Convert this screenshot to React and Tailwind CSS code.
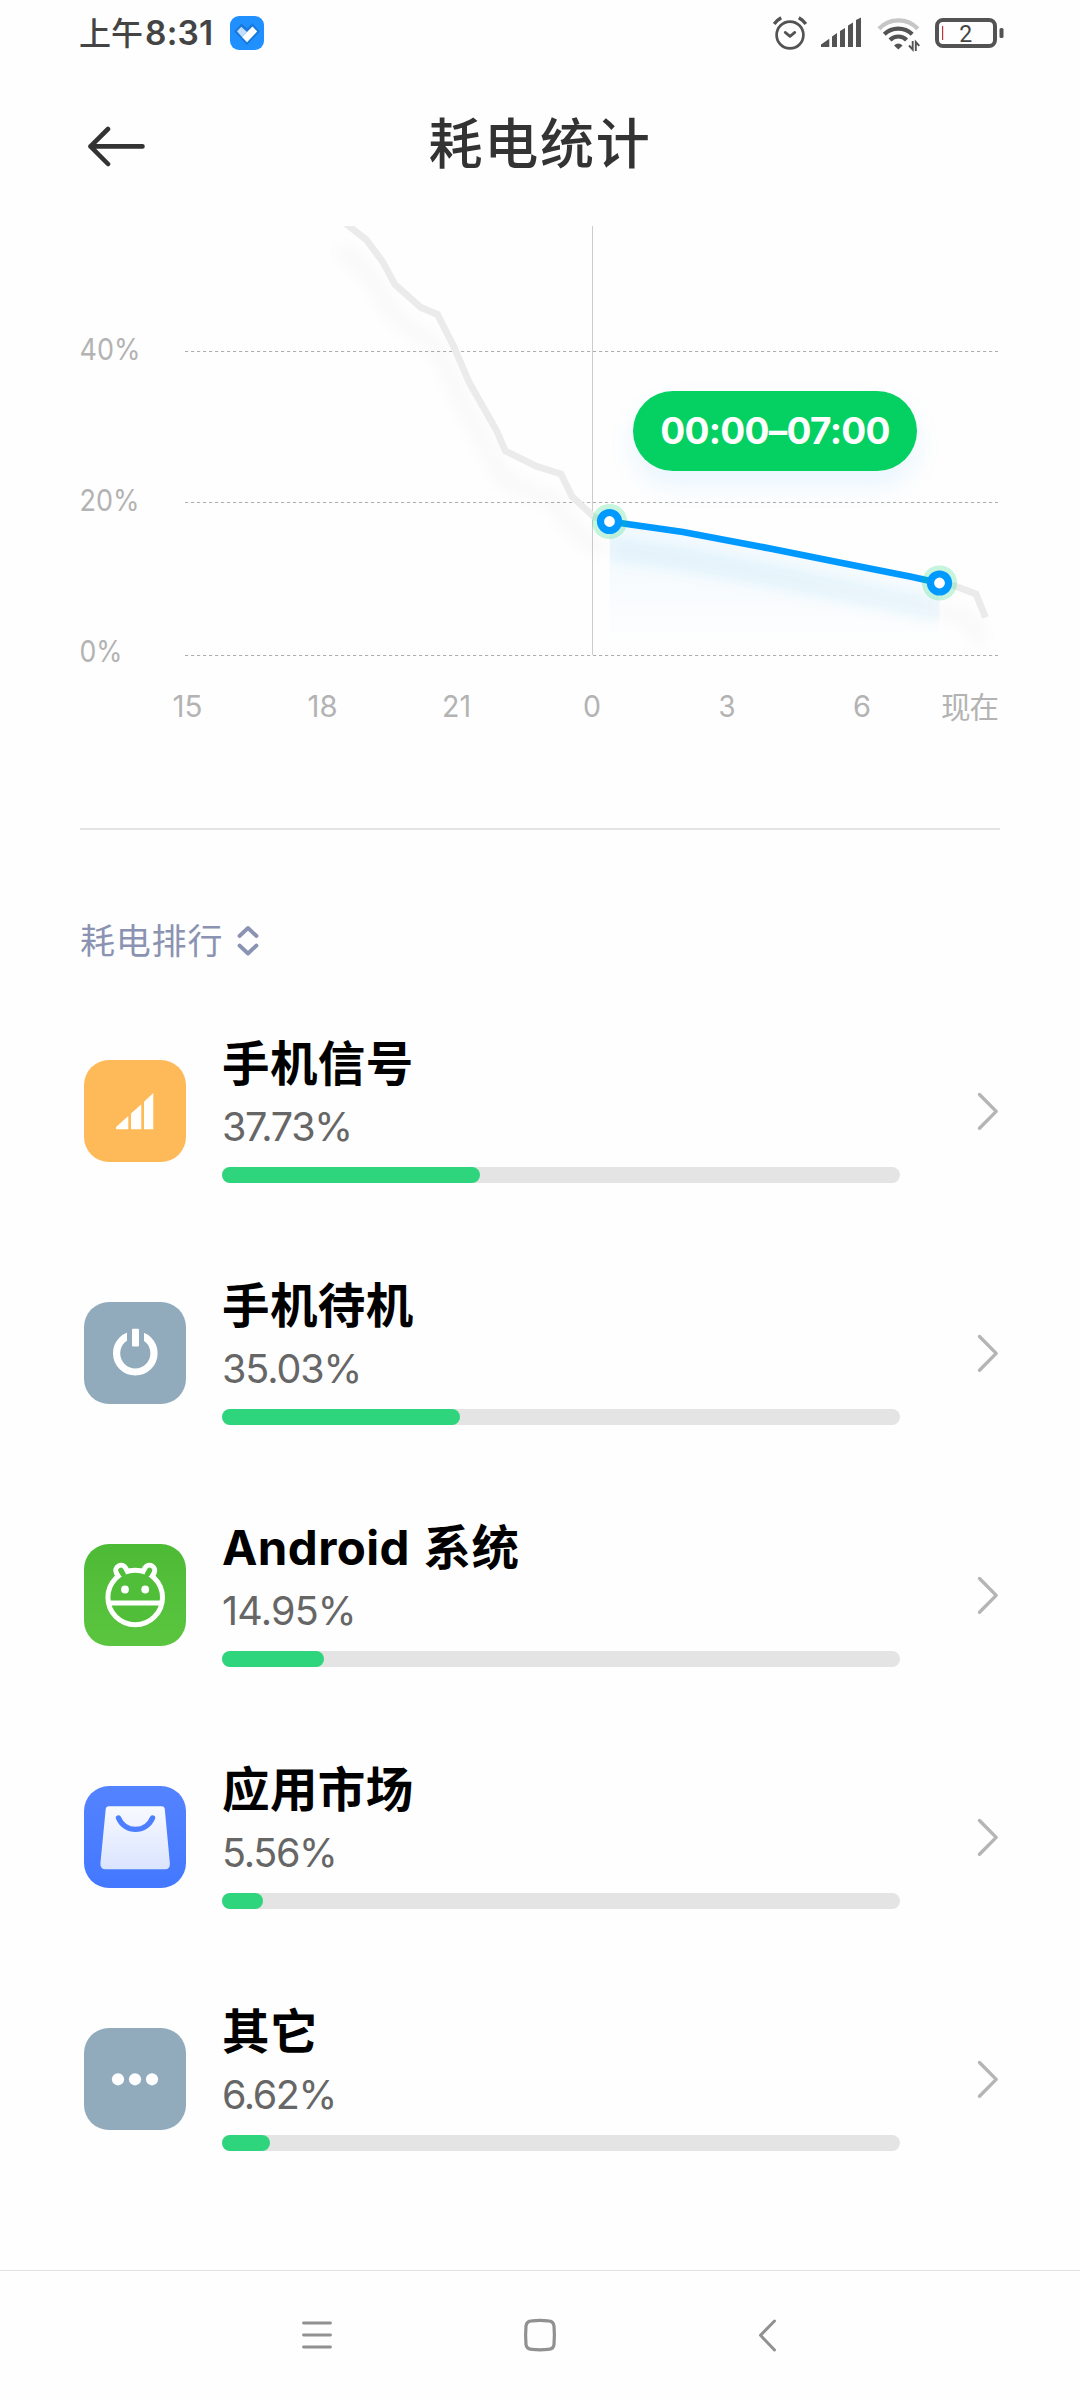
import React from "react";

const APPS = [
  { name: "手机信号", percent: "37.73%", bar: 258, icon: SignalAppIcon, spacing: "tracking-[-1.3px]" },
  { name: "手机待机", percent: "35.03%", bar: 238, icon: PowerAppIcon, spacing: "tracking-[-1.1px]" },
  { name: "Android 系统", percent: "14.95%", bar: 102, icon: AndroidAppIcon, spacing: "tracking-[-0.8px]" },
  { name: "应用市场", percent: "5.56%", bar: 41, icon: MarketAppIcon, spacing: "tracking-[-1.3px]" },
  { name: "其它", percent: "6.62%", bar: 48, icon: MoreAppIcon, spacing: "tracking-[-1.4px]" },
];

const HOURS = [
  { label: "15", x: 187.5, width: 30 },
  { label: "18", x: 322.5, width: 30 },
  { label: "21", x: 456.5, width: 29 },
  { label: "0", x: 592, width: 18 },
  { label: "3", x: 727, width: 17 },
  { label: "6", x: 862, width: 18 },
];

const LEVELS = [
  { label: "40%", y: 351.5, base: 360, width: 61 },
  { label: "20%", y: 502.5, base: 511, width: 60 },
  { label: "0%", y: 655.5, base: 662, width: 43 },
];

const PAST =
  "344,222 348,225.5 366,239.5 382.5,261.5 395,284.5 421,307.5 437.5,314.5 453.5,346 469.5,383 496.5,430.5 505.5,451 536,466 561,474 572,496.5 594,517 609.5,521.5";
const SELECTED = "609.5,521.5 683,532 770,548.5 837,562 910,576.5 939.5,583";
const REST = "939.5,583 955,586 976,594 985.5,617.5";

function StatusBar() {
  return (
    <div className="h-[72px] pl-[79px] pr-[76px] pb-[6px] flex items-center text-[#444444]">
      <span className="w-[151px] shrink-0 text-[32px] leading-[48px] font-medium whitespace-nowrap">
        上午<span className="ml-[2px] text-[33.5px] font-semibold tracking-[0.2px]">8:31</span>
      </span>
      <svg width="34" height="34" viewBox="0 0 34 34" className="shrink-0">
        <rect width="34" height="34" rx="9" fill="#2190ff" />
        <path d="M4 15.5 11.5 7.5 17 12.5 22.5 7.5 30 15.5 17 29Z" fill="#1878dc" />
        <path d="M7 15.3 11.3 10.7 17 16 12 21Z" fill="#c3defc" />
        <path d="M12 21 22.5 10.5 27.2 15.5 17 26.2Z" fill="#fff" />
      </svg>
      <svg width="36" height="40" viewBox="0 0 36 40" fill="none" stroke="#535353" className="ml-auto shrink-0" strokeLinecap="round" strokeLinejoin="round">
        <circle cx="18" cy="22" r="13.4" strokeWidth="2.7" />
        <path d="M13.2 19.4 18 23.4 22.8 19.4" strokeWidth="2.7" />
        <path d="M2.2 11Q5.2 7 9.2 4.8M26.8 4.8Q30.8 7 33.8 11" strokeLinecap="butt" strokeWidth="3.4" />
      </svg>
      <svg width="40" height="40" viewBox="0 0 40 40" className="ml-[13px] shrink-0" fill="#535353">
        <path d="M0 34V31.5L8.3 25.7V34ZM11 34V23.5L16 20V34ZM19 34V18L24 15V34ZM27 34V12.5L32 9.5V34ZM35 34V7L40 4.5V34Z" />
      </svg>
      <svg width="44" height="40" viewBox="0 0 44 40" className="ml-[16px] shrink-0" fill="none" strokeWidth="4.2">
        <path d="M2 15.8A26.5 26.5 0 0 1 40.8 15.8" stroke="#c6c6c6" />
        <path d="M7.3 21.2A20 20 0 0 1 35.2 21.2" stroke="#535353" />
        <path d="M13 27A11.6 11.6 0 0 1 29.6 27" stroke="#535353" />
        <path d="M17 32.5Q21.3 28.5 25.6 32.5L21.3 36.5Z" fill="#535353" />
        <path d="M32 32.5 35.7 36.5V28M38.8 38V29L42.3 32.8" stroke="#535353" strokeWidth="1.9" />
      </svg>
      <svg width="70" height="40" viewBox="0 0 70 40" className="ml-[13px] shrink-0">
        <rect x="3" y="7" width="58" height="26" rx="6" fill="none" stroke="#535353" strokeWidth="4" />
        <rect x="65.5" y="15" width="4" height="10" rx="1.6" fill="#535353" />
        <rect x="8" y="13" width="1.2" height="14" fill="#b8373d" />
        <text x="31.8" y="28.7" textAnchor="middle" fontSize="23" fontFamily="Roboto, sans-serif" fill="#444">
          2
        </text>
      </svg>
    </div>
  );
}

function Header() {
  return (
    <header className="h-[154px] px-[86px] pb-[8px] grid grid-cols-[62px_1fr_62px] items-center">
      <svg width="62" height="44" viewBox="0 0 62 44" fill="none" stroke="#333" strokeWidth="4.6" strokeLinecap="round" strokeLinejoin="round">
        <path d="M4.5 23.4H56.5M22 6 4.5 23.4 22 41" />
      </svg>
      <h1 className="text-center text-[54px] leading-[72px] font-medium tracking-[1.7px] text-[#333333]">
        耗电统计
      </h1>
    </header>
  );
}

function Handle({ x, y }) {
  return (
    <g>
      <circle cx={x} cy={y} r="17.6" fill="#04d162" fillOpacity="0.22" />
      <circle cx={x} cy={y} r="9" fill="#fff" stroke="#0099ff" strokeWidth="7.2" />
    </g>
  );
}

function BatteryChart() {
  return (
    <div className="relative h-[602px]">
      <svg width="1080" height="602" viewBox="0 226 1080 602" className="block">
        <defs>
          <linearGradient id="area" gradientUnits="userSpaceOnUse" x1="0" y1="521" x2="0" y2="648">
            <stop offset="0" stopColor="#0099ff" stopOpacity="0.055" />
            <stop offset="1" stopColor="#0099ff" stopOpacity="0" />
          </linearGradient>
          <filter id="soft" filterUnits="userSpaceOnUse" x="200" y="180" width="880" height="520">
            <feGaussianBlur stdDeviation="8" />
          </filter>
          <clipPath id="range">
            <rect x="610" y="490" width="329.5" height="164" />
          </clipPath>
        </defs>

        {LEVELS.map((l) => (
          <g key={l.label}>
            <text x="79.5" y={l.base} fontSize="29.5" fill="#b3b3b3" textLength={l.width} lengthAdjust="spacingAndGlyphs">
              {l.label}
            </text>
            <line x1="185" x2="998" y1={l.y} y2={l.y} stroke="#adadad" strokeDasharray="3.2 2.8" />
          </g>
        ))}
        <line x1="592.5" x2="592.5" y1="226" y2="655" stroke="#cccccc" />

        <g fill="none" strokeWidth="11" filter="url(#soft)" transform="translate(-4 27)">
          <polyline points={PAST} stroke="#000" strokeOpacity="0.03" />
          <polyline points={REST} stroke="#000" strokeOpacity="0.03" />
        </g>
        <polygon points={`${SELECTED} 939.5,650 609.5,650`} fill="url(#area)" />
        <g clipPath="url(#range)">
          <polyline points={SELECTED} fill="none" stroke="#2f9fd8" strokeOpacity="0.13" strokeWidth="14" filter="url(#soft)" transform="translate(0 27)" />
        </g>

        <g fill="none" strokeWidth="6.8">
          <polyline points={PAST} stroke="#ebebeb" />
          <polyline points={REST} stroke="#ebebeb" />
          <polyline points={SELECTED} stroke="#0099ff" />
        </g>
        <Handle x={609.5} y={521.5} />
        <Handle x={939.5} y={583} />

        {HOURS.map((h) => (
          <text key={h.label} x={h.x - h.width / 2} y="717" fontSize="29.5" fill="#b3b3b3" textLength={h.width} lengthAdjust="spacingAndGlyphs">
            {h.label}
          </text>
        ))}
        <text x="941" y="717.5" fontSize="29.5" fill="#b3b3b3" textLength="58">
          现在
        </text>
      </svg>
      <div className="absolute left-[633px] top-[165px] w-[284px] h-[80px] rounded-full bg-[#04d162] shadow-[0_14px_28px_rgba(0,153,255,0.09)] flex items-center justify-center text-white text-[37px] font-bold tracking-[-0.7px] whitespace-nowrap">
        00:00–07:00
      </div>
    </div>
  );
}

function SignalAppIcon() {
  return (
    <svg width="102" height="102" viewBox="0 0 102 102" fill="#fffefa">
      <rect width="102" height="102" rx="25" fill="#feba59" />
      <path d="M32 69.3V67L44.3 56V69.3ZM47 69.3V53.5L57.3 44.2V69.3ZM60 69.3V41.8L69.3 33V69.3Z" />
    </svg>
  );
}

function PowerAppIcon() {
  return (
    <svg width="102" height="102" viewBox="0 0 102 102">
      <rect width="102" height="102" rx="25" fill="#91abbd" />
      <circle cx="51.3" cy="51.3" r="18.7" fill="none" stroke="#fff" strokeWidth="7.2" />
      <rect x="43" y="24" width="17" height="22" fill="#91abbd" />
      <rect x="48" y="26.7" width="7" height="17.8" rx="1" fill="#fff" />
    </svg>
  );
}

function AndroidAppIcon() {
  return (
    <svg width="102" height="102" viewBox="0 0 102 102" fill="none" strokeLinecap="round">
      <defs>
        <linearGradient id="droid" x1="0" y1="0" x2="0" y2="1">
          <stop offset="0" stopColor="#4dba36" />
          <stop offset="1" stopColor="#5bc53f" />
        </linearGradient>
      </defs>
      <rect width="102" height="102" rx="25" fill="url(#droid)" />
      <path d="M37 26.5 41 34M65.5 26.5 61.5 34" stroke="#fff" strokeWidth="15.5" />
      <circle cx="51.2" cy="53.5" r="27.3" fill="#51be39" stroke="#fff" strokeWidth="5" />
      <path d="M37 26.5 39 30M65.5 26.5 63.5 30" stroke="#51be39" strokeWidth="5.5" />
      <path d="M26 59H76.5" stroke="#fff" strokeWidth="4.8" strokeLinecap="butt" />
      <circle cx="41" cy="45.5" r="3.9" fill="#fff" />
      <circle cx="61.2" cy="45.5" r="3.9" fill="#fff" />
    </svg>
  );
}

function MarketAppIcon() {
  return (
    <svg width="102" height="102" viewBox="0 0 102 102">
      <defs>
        <linearGradient id="market" x1="0" y1="0" x2="0" y2="1">
          <stop offset="0" stopColor="#5483ff" />
          <stop offset="1" stopColor="#4378ff" />
        </linearGradient>
        <linearGradient id="bag" x1="0" y1="0" x2="0" y2="1">
          <stop offset="0" stopColor="#f8faff" />
          <stop offset="1" stopColor="#dae4ff" />
        </linearGradient>
      </defs>
      <rect width="102" height="102" rx="25" fill="url(#market)" />
      <path
        d="M25 20.2H77.5Q80.6 20.2 80.8 23.2L85.9 77.5Q86.2 83.3 81 83.3H21.5Q16.2 83.3 16.4 77.5L21.7 23.2Q22 20.2 25 20.2Z"
        fill="url(#bag)"
      />
      <path d="M34.5 32C41 47.2 62 47.2 68.5 32" fill="none" stroke="#4c7eff" strokeWidth="5.4" strokeLinecap="round" />
    </svg>
  );
}

function MoreAppIcon() {
  return (
    <svg width="102" height="102" viewBox="0 0 102 102" fill="#fff">
      <rect width="102" height="102" rx="25" fill="#91abbd" />
      <circle cx="34" cy="51.3" r="6.1" />
      <circle cx="51" cy="51.3" r="6.1" />
      <circle cx="68" cy="51.3" r="6.1" />
    </svg>
  );
}

function AppRow({ app }) {
  const Icon = app.icon;
  return (
    <li className="h-[242px] pl-[84px] pr-[80px] flex items-center">
      <Icon />
      <div className="ml-9 w-[678px] h-full pt-[44px]">
        <div className="h-[60px] leading-[60px] text-[47.5px] font-bold text-black tracking-[0.4px] [word-spacing:2px] whitespace-nowrap">
          {app.name}
        </div>
        <div className={`mt-[5px] h-[56px] leading-[56px] text-[39.5px] text-[#666666] ${app.spacing}`}>
          {app.percent}
        </div>
        <div className="mt-3 h-4 rounded-full bg-[#e4e4e4]">
          <div className="h-4 rounded-full bg-[#2fd57c]" style={{ width: app.bar }} />
        </div>
      </div>
      <svg width="24" height="40" viewBox="0 0 24 40" className="ml-auto" fill="none" stroke="#b5b5b5" strokeWidth="3.4" strokeLinecap="round" strokeLinejoin="round">
        <path d="M3.5 3.5 20.2 20.4 3.5 37.2" />
      </svg>
    </li>
  );
}

function NavBar() {
  return (
    <nav className="h-[130px] border-t border-[#e2e2e2] px-[297px] pb-[1px] flex items-center justify-between">
      <svg width="40" height="40" viewBox="0 0 40 40" fill="none" stroke="#919191" strokeWidth="2.8" strokeLinecap="round">
        <path d="M6.5 8H33.5M6.5 20H33.5M6.5 32H33.5" />
      </svg>
      <svg width="40" height="40" viewBox="0 0 40 40" fill="none" stroke="#919191" strokeWidth="3.2">
        <path d="M12 5.800Q20 5 28 5.800Q33.500 6 34 11Q34.800 20 34 29.500Q33.500 34.200 28 34.400Q20 35.200 12 34.400Q6.500 34.200 6 29.500Q5.200 20 6 11Q6.500 6 12 5.800Z" />
      </svg>
      <svg width="40" height="40" viewBox="0 0 40 40" fill="none" stroke="#919191" strokeWidth="3" strokeLinecap="round" strokeLinejoin="round">
        <path d="M31.500 6 17.500 20.300 31.500 35" />
      </svg>
    </nav>
  );
}

export default function App() {
  return (
    <div className="w-[1080px] h-[2400px] overflow-hidden bg-[#fefefe] flex flex-col font-[Inter,'Noto_Sans_CJK_SC',sans-serif]">
      <StatusBar />
      <Header />
      <BatteryChart />
      <div className="mx-[80px] h-[2px] bg-[#e4e4e4]" />
      <div className="h-[160px] pt-[61px] pl-[80px] flex items-start">
        <div className="h-[100px] flex items-center text-[#8b93b2]">
          <span className="text-[35px] leading-[50px] tracking-[0.8px]">耗电排行</span>
          <svg width="24" height="34" viewBox="0 0 24 34" className="ml-[13px]" fill="none" stroke="#8b93b2" strokeWidth="3.8" strokeLinecap="round" strokeLinejoin="round">
            <path d="M3.5 12 12 4 20.5 12M3.5 21.5 12 29.5 20.5 21.5" />
          </svg>
        </div>
      </div>
      <ul className="flex-1">
        {APPS.map((app) => (
          <AppRow key={app.name} app={app} />
        ))}
      </ul>
      <NavBar />
    </div>
  );
}
